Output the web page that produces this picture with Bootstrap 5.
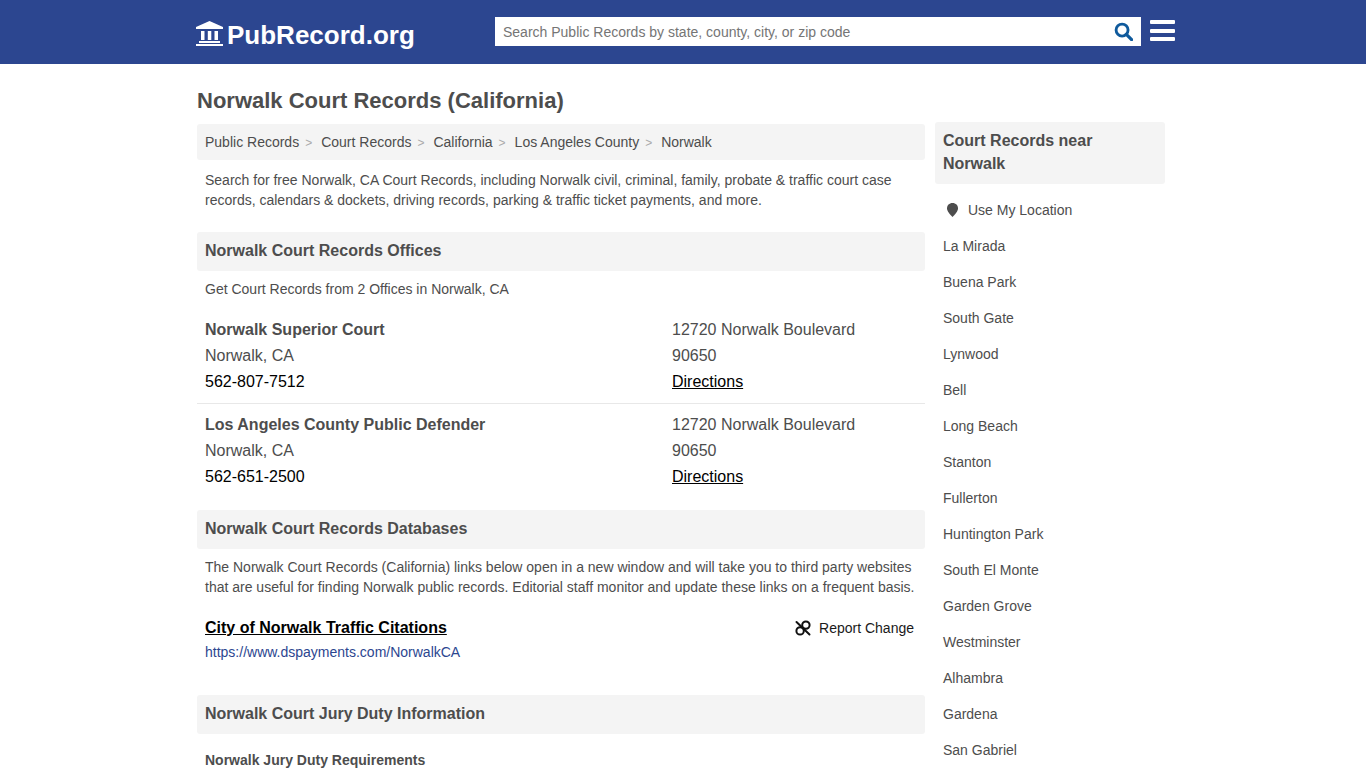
<!DOCTYPE html>
<html lang="en">
<head>
    <meta charset="UTF-8">
    <meta name="viewport" content="width=device-width, initial-scale=1.0">
    <title>Norwalk Court Records (California)</title>
    <link href="https://cdn.jsdelivr.net/npm/bootstrap@5.3.0/dist/css/bootstrap.min.css" rel="stylesheet">
    <style>
        body { font-family: "Liberation Sans", Arial, sans-serif; color: #4d4d4d; font-size: 14px; line-height: 20px; }
        .site-head { background: #2c4690; height: 64px; }
        .head-inner { width: 980px; margin-left: 195px; height: 64px; }
        .logo-link { width: 300px; padding-left: 1px; color: #fff; font-size: 26px; font-weight: 700; text-decoration: none; line-height: 32px; padding-top: 5px; }
        .logo-link svg { margin-right: 4px; margin-top: -2px; }
        .search-box { width: 646px; height: 29px; background: #fff; margin-top: -1px; }
        .search-box input { border: 0; outline: 0; flex: 1; padding: 0 8px; font-size: 14px; color: #4d4d4d; min-width: 0; background: transparent; font-family: inherit; }
        .search-box input::placeholder { color: #757575; opacity: 1; }
        .search-box svg { margin-right: 8px; }
        .burger { width: 25px; margin-left: 9px; margin-top: -3px; gap: 4.500px; }
        .burger span { display: block; height: 4px; background: #fff; border-radius: 1px; }
        .page-wrap { width: 968px; margin-left: 197px; }
        .page-title { font-size: 22px; font-weight: 700; line-height: 28px; margin: 23px 0 9px; color: #4d4d4d; }
        .cols-wrap { column-gap: 10px; }
        .main-col { width: 728px; flex: none; }
        .side-col { width: 230px; flex: none; margin-top: -2px; }
        .crumbs { background: #f4f4f4; height: 36px; border-radius: 3px; padding: 8px; margin: 0; list-style: none; }
        .crumbs li { color: #4d4d4d; }
        .crumbs li + li::before { content: ">"; color: #aaa; font-size: 12px; padding: 0 9px 0 6px; }
        .intro { padding: 10px 8px 0; margin: 0 0 22px; }
        .sec-title { background: #f4f4f4; border-radius: 3px; font-size: 16px; font-weight: 700; line-height: 20px; padding: 9px 8px 10px; margin: 0; color: #4d4d4d; }
        .sec-text { padding: 8px 8px 0; margin: 0; }
        .office { padding: 18px 8px 8px; font-size: 16px; line-height: 26px; }
        .office + .office { border-top: 1px solid #e8e8e8; padding-top: 8px; }
        .office-left { width: 467px; flex: none; }
        .office b { font-weight: 700; }
        .office .tel { color: #000; }
        .office a { color: #000; }
        .db-head { margin-top: 12px; }
        .db-row { padding: 21px 11px 0 8px; }
        .db-link { color: #000; font-size: 16px; font-weight: 700; line-height: 20px; }
        .report { color: #1a1a1a; }
        .report svg { margin-right: 8px; }
        .db-url { display: block; color: #2c4690; text-decoration: none; padding: 4px 8px 0; margin-bottom: 33px; }
        .jury-head { font-size: 14px; font-weight: 700; line-height: 20px; padding: 0 8px; margin: 16px 0 0; color: #4d4d4d; }
        .side-title { background: #f4f4f4; border-radius: 3px; font-size: 16px; font-weight: 700; line-height: 23px; padding: 7px 8px 9px; margin: 0 0 8px; color: #4d4d4d; }
        .near-item { height: 36px; line-height: 36px; padding-left: 8px; color: #4d4d4d; }
        .near-item svg { margin: -3px 9px 0 3px; }
    </style>
</head>
<body>

    <!-- Header -->
    <div class="site-head">
        <div class="head-inner d-flex align-items-center">
            <a class="logo-link d-flex align-items-center" href="#">
                <svg width="27" height="25" viewBox="0 0 27 25" fill="#fff"><path d="M13.500 0 27 6v2H0V6zM5 10h3.500v9H5zM11.800 10h3.500v9h-3.500zM18.500 10H22v9h-3.500zM3 20h21v2H3zM0 23h27v2H0z"/></svg>
                PubRecord.org
            </a>
            <div class="search-box d-flex align-items-center">
                <input type="text" placeholder="Search Public Records by state, county, city, or zip code">
                <svg width="19" height="19" viewBox="0 0 20 20" fill="none" stroke="#0f5a9c"><circle cx="8.500" cy="8.500" r="6.300" stroke-width="3"/><path d="m13 13 5.500 5.500" stroke-width="3.400" stroke-linecap="round"/></svg>
            </div>
            <div class="burger d-flex flex-column"><span></span><span></span><span></span></div>
        </div>
    </div>

    <div class="page-wrap">
        <h1 class="page-title">Norwalk Court Records (California)</h1>
        <div class="cols-wrap d-flex align-items-start">

            <!-- Main column -->
            <div class="main-col">
                <ol class="crumbs d-flex">
                    <li>Public Records</li>
                    <li>Court Records</li>
                    <li>California</li>
                    <li>Los Angeles County</li>
                    <li>Norwalk</li>
                </ol>
                <p class="intro">Search for free Norwalk, CA Court Records, including Norwalk civil, criminal, family, probate &amp; traffic court case records, calendars &amp; dockets, driving records, parking &amp; traffic ticket payments, and more.</p>

                <h2 class="sec-title">Norwalk Court Records Offices</h2>
                <p class="sec-text">Get Court Records from 2 Offices in Norwalk, CA</p>

                <div class="office d-flex">
                    <div class="office-left">
                        <b>Norwalk Superior Court</b><br>Norwalk, CA<br><span class="tel">562-807-7512</span>
                    </div>
                    <div>12720 Norwalk Boulevard<br>90650<br><a href="#">Directions</a></div>
                </div>
                <div class="office d-flex">
                    <div class="office-left">
                        <b>Los Angeles County Public Defender</b><br>Norwalk, CA<br><span class="tel">562-651-2500</span>
                    </div>
                    <div>12720 Norwalk Boulevard<br>90650<br><a href="#">Directions</a></div>
                </div>

                <h2 class="sec-title db-head">Norwalk Court Records Databases</h2>
                <p class="sec-text">The Norwalk Court Records (California) links below open in a new window and will take you to third party websites that are useful for finding Norwalk public records. Editorial staff monitor and update these links on a frequent basis.</p>

                <div class="db-row d-flex justify-content-between align-items-center">
                    <a class="db-link" href="#">City of Norwalk Traffic Citations</a>
                    <span class="report d-flex align-items-center">
                        <svg width="16" height="16" viewBox="0 0 16 16" fill="none" stroke="#111" stroke-width="2" stroke-linecap="round"><circle cx="10.900" cy="5.100" r="3.700"/><circle cx="5.100" cy="10.900" r="3.700"/><path d="M1.500 2l13 12.500"/></svg>
                        Report Change
                    </span>
                </div>
                <a class="db-url" href="#">https://www.dspayments.com/NorwalkCA</a>

                <h2 class="sec-title">Norwalk Court Jury Duty Information</h2>
                <h3 class="jury-head">Norwalk Jury Duty Requirements</h3>
            </div>

            <!-- Sidebar -->
            <div class="side-col">
                <h2 class="side-title">Court Records near Norwalk</h2>
                <div class="near-item">
                    <svg width="13" height="14" viewBox="0 0 13 14" fill="#4d4d4d"><path d="M6.500 0C9.800 0 12 2.300 12 5.200c0 3-3 6.300-5.500 8.800C4 11.500 1 8.200 1 5.200 1 2.300 3.200 0 6.500 0z"/></svg>Use My Location
                </div>
                <div class="near-item">La Mirada</div>
                <div class="near-item">Buena Park</div>
                <div class="near-item">South Gate</div>
                <div class="near-item">Lynwood</div>
                <div class="near-item">Bell</div>
                <div class="near-item">Long Beach</div>
                <div class="near-item">Stanton</div>
                <div class="near-item">Fullerton</div>
                <div class="near-item">Huntington Park</div>
                <div class="near-item">South El Monte</div>
                <div class="near-item">Garden Grove</div>
                <div class="near-item">Westminster</div>
                <div class="near-item">Alhambra</div>
                <div class="near-item">Gardena</div>
                <div class="near-item">San Gabriel</div>
            </div>
        </div>
    </div>

    <script src="https://cdn.jsdelivr.net/npm/bootstrap@5.3.0/dist/js/bootstrap.bundle.min.js"></script>
</body>
</html>
